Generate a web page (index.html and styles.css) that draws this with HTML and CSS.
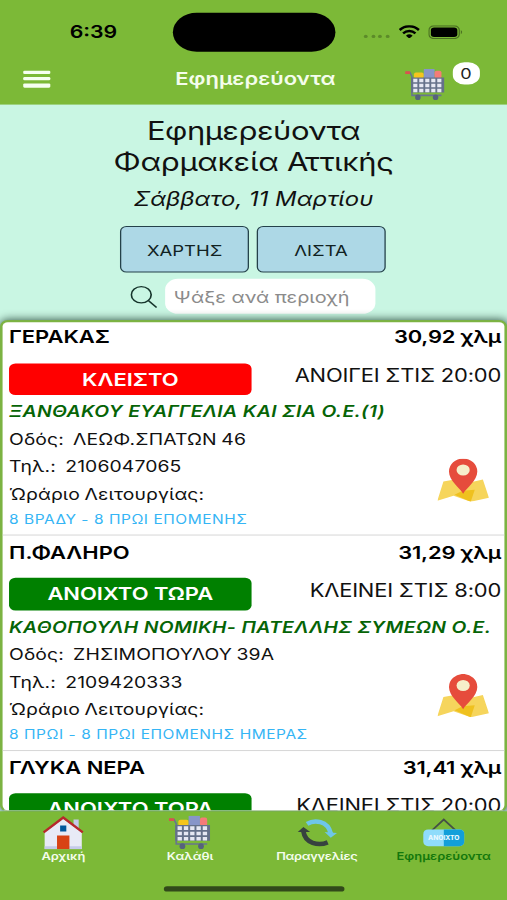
FILE: index.html
```html
<!DOCTYPE html>
<html lang="el">
<head>
    <meta charset="UTF-8">
    <title>Εφημερεύοντα</title>
    <link rel="stylesheet" href="styles.css">
</head>
<body>
<svg class="defs">
    <symbol id="cart" viewBox="0 0 40 32" preserveAspectRatio="none">
        <rect x="9" y="4" width="10" height="6" rx="2" fill="#f5c51d"/>
        <rect x="19" y="0" width="11" height="10" rx="1" fill="#8795c9"/>
        <rect x="30" y="2" width="7" height="8" rx="2" fill="#f57b78"/>
        <path d="M1 4h4l2 4v19h30" fill="none" stroke="#68758e" stroke-width="1.6"/>
        <path d="M0 4h5" stroke="#d9534f" stroke-width="2.6"/>
        <path d="M6 9h34v15H6z" fill="#65718a"/>
        <path d="M8.300 12h30.500M8.300 17h30.500M8.300 22h30.500" stroke="#e6e8f3" stroke-width="3.400" stroke-dasharray="4.200 1.900"/>
        <circle cx="13" cy="29" r="2.800" fill="#56627d"/>
        <circle cx="31" cy="29" r="2.800" fill="#56627d"/>
    </symbol>
    <symbol id="map" viewBox="0 0 51 43" preserveAspectRatio="none">
        <path d="M6 23l11-2 15 3 13-3 6 18-18 4-17-6-16 5z" fill="#f6d55c"/>
        <path d="M17 36l8-4 12-1-4 12z" fill="#efc11f"/>
        <path d="M25.500 35C22 29 11.500 22 11.500 13a14 13 0 0 1 28 0C39.500 22 29 29 25.500 35z" fill="#e64c3c"/>
        <ellipse cx="25.500" cy="11.500" rx="6.500" ry="5.500" fill="#f6efca"/>
    </symbol>
</svg>
<div class="phone">
    <div class="head">
        <div class="status">
            <span class="time">6:39</span>
            <div class="island"></div>
            <div class="signal">
                <i></i><i></i><i></i><i></i>
                <svg class="wifi" viewBox="0 0 21 13" preserveAspectRatio="none">
                    <path d="M1 4.600a14 14 0 0 1 19 0M4.400 7.900a9 9 0 0 1 12.200 0" fill="none" stroke="#000" stroke-width="2.500"/>
                    <path d="M7.200 10.200a5 5 0 0 1 6.600 0L10.500 13z"/>
                </svg>
                <svg class="battery" viewBox="0 0 27 13" preserveAspectRatio="none">
                    <rect x=".5" y=".5" width="23.500" height="12" rx="3.800" fill="none" stroke="#4b7022"/>
                    <rect x="2" y="2" width="20.500" height="9" rx="2.500"/>
                    <path d="M25.200 4.500q2 2 0 4z" fill="#4b7022"/>
                </svg>
            </div>
        </div>
        <div class="header">
            <div class="menu"><b></b><b></b><b></b></div>
            <h1>Εφημερεύοντα</h1>
            <div class="cart_box">
                <svg class="cart_img"><use href="#cart"/></svg>
                <span class="count">0</span>
            </div>
        </div>
    </div>
    <div class="top">
        <h2>Εφημερεύοντα<br><span class="attica">Φαρμακεία Αττικής</span></h2>
        <p class="date">Σάββατο, 11 Μαρτίου</p>
        <div class="btns">
            <button>ΧΑΡΤΗΣ</button>
            <button>ΛΙΣΤΑ</button>
        </div>
        <div class="search">
            <svg viewBox="0 0 21 22"><circle cx="8.500" cy="9" r="7.700"/><path d="M14.200 14.700l6.200 6.300"/></svg>
            <input type="text" placeholder="Ψάξε ανά περιοχή">
        </div>
    </div>
    <div class="list">
        <div class="item">
            <div class="line"><strong>ΓΕΡΑΚΑΣ</strong><strong>30,92 χλμ</strong></div>
            <div class="line state"><span class="tag closed">ΚΛΕΙΣΤΟ</span><span class="when">ΑΝΟΙΓΕΙ ΣΤΙΣ 20:00</span></div>
            <p class="name">ΞΑΝΘΑΚΟΥ ΕΥΑΓΓΕΛΙΑ ΚΑΙ ΣΙΑ Ο.Ε.(1)</p>
            <div class="info">
                <div>
                    <p>Οδός:&nbsp; ΛΕΩΦ.ΣΠΑΤΩΝ 46</p>
                    <p>Τηλ.:&nbsp; 2106047065</p>
                    <p>Ώράριο Λειτουργίας:</p>
                </div>
                <svg><use href="#map"/></svg>
            </div>
            <p class="hours">8 ΒΡΑΔΥ - 8 ΠΡΩΙ ΕΠΟΜΕΝΗΣ</p>
        </div>
        <div class="item">
            <div class="line"><strong>Π.ΦΑΛΗΡΟ</strong><strong>31,29 χλμ</strong></div>
            <div class="line state"><span class="tag">ΑΝΟΙΧΤΟ ΤΩΡΑ</span><span class="when">ΚΛΕΙΝΕΙ ΣΤΙΣ 8:00</span></div>
            <p class="name">ΚΑΘΟΠΟΥΛΗ ΝΟΜΙΚΗ- ΠΑΤΕΛΛΗΣ ΣΥΜΕΩΝ Ο.Ε.</p>
            <div class="info">
                <div>
                    <p>Οδός:&nbsp; ΖΗΣΙΜΟΠΟΥΛΟΥ 39Α</p>
                    <p>Τηλ.:&nbsp; 2109420333</p>
                    <p>Ώράριο Λειτουργίας:</p>
                </div>
                <svg><use href="#map"/></svg>
            </div>
            <p class="hours">8 ΠΡΩΙ - 8 ΠΡΩΙ ΕΠΟΜΕΝΗΣ ΗΜΕΡΑΣ</p>
        </div>
        <div class="item">
            <div class="line"><strong>ΓΛΥΚΑ ΝΕΡΑ</strong><strong>31,41 χλμ</strong></div>
            <div class="line state"><span class="tag">ΑΝΟΙΧΤΟ ΤΩΡΑ</span><span class="when">ΚΛΕΙΝΕΙ ΣΤΙΣ 20:00</span></div>
        </div>
    </div>
    <div class="tabs">
        <a>
            <svg viewBox="0 0 40 34" preserveAspectRatio="none">
                <path d="M30 4h5v12h-5z" fill="#c5cae9"/>
                <path d="M2 17L20 3l18 14v17H2z" fill="#e8eaf6"/>
                <path d="M2 31h36v3H2z" fill="#c5cae9"/>
                <path d="M1 17L20 2l19 15" fill="none" stroke="#b7282c" stroke-width="2.400"/>
                <path d="M14 20h12v14H14z" fill="#d84315"/>
                <path d="M17 10h6v6h-6z" fill="#01579b"/>
            </svg>
            <span>Αρχική</span>
        </a>
        <a>
            <svg><use href="#cart"/></svg>
            <span>Καλάθι</span>
        </a>
        <a>
            <svg viewBox="0 0 40 34" preserveAspectRatio="none">
                <path d="M10 8.500C17 4 30 5 33 18" fill="none" stroke="#6ec6e8" stroke-width="4.500"/>
                <path d="M27 16.500l12 1-6 5z" fill="#6ec6e8"/>
                <path d="M30 27C21 31 8 28 6.500 16" fill="none" stroke="#37423f" stroke-width="4.500"/>
                <path d="M1 16.500l5.500-5 6.500 5z" fill="#37423f"/>
            </svg>
            <span class="orders">Παραγγελίες</span>
        </a>
        <a class="active">
            <svg viewBox="0 0 42 34" preserveAspectRatio="none">
                <path d="M9 15L21 4l12 11" fill="none" stroke="#455046" stroke-width="1.800"/>
                <rect y="14" width="42" height="17" rx="5" fill="#8fdcfb"/>
                <path d="M21 14h16a5 5 0 0 1 5 5v7a5 5 0 0 1-5 5H21z" fill="#129fda"/>
                <text x="5" y="25" textLength="32" lengthAdjust="spacingAndGlyphs">ΑΝΟΙΧΤΟ</text>
            </svg>
            <span>Εφημερεύοντα</span>
        </a>
    </div>
    <div class="home_bar"></div>
</div>
</body>
</html>
```

FILE: styles.css
```css
*{
    margin:0;
    padding:0;
    box-sizing:border-box;
}
body{
    width:507px;
    height:900px;
    overflow:hidden;
    font-family:Inter,"Noto Sans",sans-serif;
    color:#111;
}
.defs{
    display:none;
}
/* 393x852 screen stretched to the window */
.phone{
    width:393px;
    height:852px;
    display:flex;
    flex-direction:column;
    overflow:hidden;
    background:#c9f6e3;
    transform:scale(1.29008,1.05634);
    transform-origin:0 0;
    position:relative;
}
.head{
    flex:none;
    background:#7cb937;
}
.status{
    height:58.500px;
    display:grid;
    grid-template-columns:134px 126px 1fr;
}
.time{
    padding:19.500px 0 0 54px;
    font-size:16.500px;
    line-height:21px;
    font-weight:600;
    color:#000;
}
.island{
    height:37px;
    margin-top:12px;
    border-radius:19px;
    background:#000;
}
.signal{
    display:flex;
    height:13px;
    margin-top:23.500px;
    padding-left:22px;
}
.signal i{
    width:3px;
    height:3px;
    margin:9.500px 2.600px 0 0;
    border-radius:50%;
    background:#5c8b29;
}
.wifi{
    width:16.500px;
    height:12.500px;
    margin-left:5px;
}
.battery{
    width:27px;
    height:13px;
    margin-left:6.500px;
}
.header{
    height:40px;
    display:grid;
    grid-template-columns:100px 196px 1fr;
}
.menu{
    padding:8.500px 0 0 17.500px;
}
.menu b{
    display:block;
    width:21.500px;
    height:3.300px;
    margin-bottom:2.900px;
    border-radius:1px;
    background:#f6fff0;
}
.header h1{
    font-size:17px;
    line-height:31px;
    font-weight:600;
    text-align:center;
    color:#f4fdec;
}
.cart_box{
    display:flex;
    align-items:flex-start;
}
.cart_img{
    width:30.500px;
    height:30px;
    margin:6.500px 6px 0 18px;
}
.count{
    width:21.500px;
    height:21.500px;
    border-radius:9px;
    background:#fff;
    font-size:14px;
    line-height:22px;
    text-align:center;
    color:#222;
}
.top{
    height:204.500px;
    flex:none;
    padding-top:11.600px;
    text-align:center;
}
.top h2{
    font-size:24px;
    line-height:29px;
    font-weight:400;
    letter-spacing:-.380px;
}
.top .attica{
    letter-spacing:-.200px;
}
.date{
    font-size:18.500px;
    line-height:30px;
    margin-top:4.500px;
    font-style:italic;
}
.btns{
    display:flex;
    gap:6px;
    margin:11.400px 0 0 93.300px;
}
.btns button{
    width:99.700px;
    height:44.500px;
    border:1px solid #24414a;
    border-radius:5px;
    padding-top:1px;
    background:#add8e6;
    font:14.300px/20px Inter,sans-serif;
    color:#122;
}
.search{
    display:flex;
    margin:6px 0 0 101px;
}
.search svg{
    width:21px;
    height:22px;
    margin:6px 5.500px 0 0;
    fill:none;
    stroke:#16352c;
    stroke-width:1.300;
}
.search input{
    width:163.500px;
    height:33px;
    border:none;
    border-radius:10px;
    padding:2px 0 0 7px;
    background:#fff;
    font:15.400px Inter,sans-serif;
}
.search input::placeholder{
    color:#8b8b8b;
}
.list{
    height:465px;
    flex:none;
    border:2px solid #7cb342;
    border-bottom:1px solid #a9c496;
    border-radius:6px;
    background:#fff;
    box-shadow:0 0 8px rgba(0,30,20,.8);
    overflow:hidden;
}
.item{
    height:203.700px;
    padding:5.800px 2.600px 0 5px;
    border-bottom:1.500px solid #d8d8d8;
}
.item:first-child{
    height:202.300px;
    padding-top:4.400px;
}
.line{
    display:flex;
    justify-content:space-between;
    font-size:17px;
    line-height:21px;
}
.line strong{
    font-weight:600;
    color:#000;
}
.line strong:last-child{
    letter-spacing:-.150px;
}
.state{
    height:30.300px;
    margin-top:13.200px;
}
.tag{
    width:188px;
    border-radius:5px;
    background:#008000;
    line-height:31px;
    text-align:center;
    font-weight:600;
    color:#fff;
}
.closed{
    background:#f00;
}
.when{
    padding-top:2px;
    letter-spacing:-.150px;
}
.name{
    margin-top:3.300px;
    font-size:15px;
    line-height:25px;
    font-weight:600;
    font-style:italic;
    letter-spacing:.290px;
    white-space:nowrap;
    color:#066406;
}
.info{
    display:flex;
    justify-content:space-between;
    padding-top:.700px;
    font-size:15px;
    line-height:26.200px;
    word-spacing:-.700px;
    letter-spacing:.080px;
}
.info svg{
    width:40px;
    height:41px;
    margin:31.500px 9.500px 0 0;
}
.hours{
    font-size:12px;
    line-height:21.500px;
    letter-spacing:.420px;
    color:#35b5f5;
}
.tabs{
    height:84px;
    flex:none;
    display:grid;
    grid-template-columns:repeat(4,1fr);
    background:#7cb937;
    position:relative;
}
.tabs a{
    display:flex;
    flex-direction:column;
    align-items:center;
    padding-top:4px;
    font-size:10px;
    line-height:12px;
    font-weight:600;
    color:#f4fdec;
}
.tabs svg{
    width:32px;
    height:32px;
}
.tabs .orders{
    letter-spacing:-.250px;
}
.tabs .active{
    color:#14780c;
}
.tabs text{
    font-size:6px;
    font-weight:800;
    fill:#e8f8ff;
}
.home_bar{
    position:absolute;
    left:127px;
    bottom:8.500px;
    width:139.500px;
    height:4.800px;
    border-radius:3px;
    background:#31491a;
}
```
